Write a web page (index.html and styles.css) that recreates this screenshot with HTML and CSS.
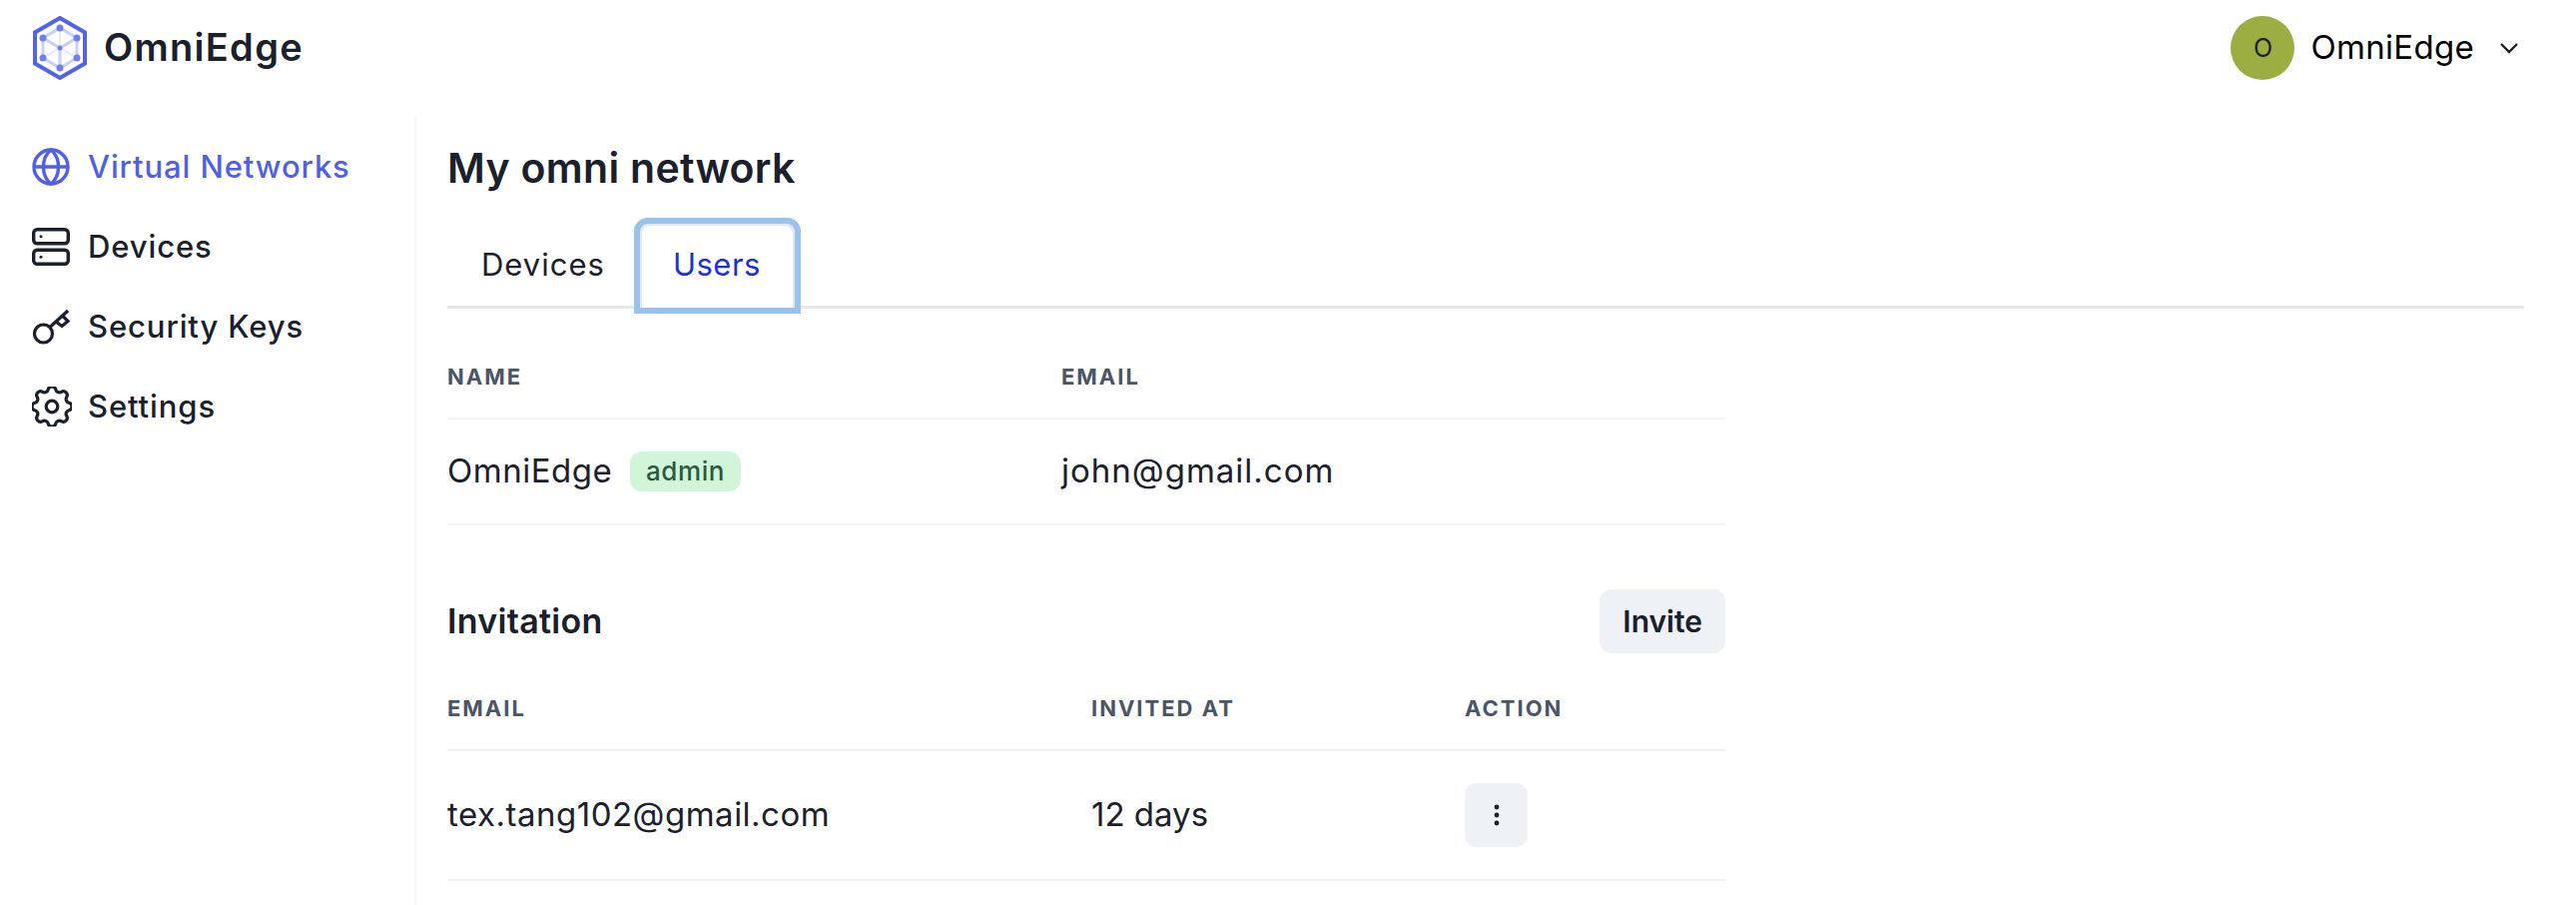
FILE: index.html
```html
<!DOCTYPE html>
<html>
<head>
    <meta charset="UTF-8">
    <title>OmniEdge</title>
    <meta name="viewport" content="width=device-width, initial-scale=1.0">
    <link rel="stylesheet" href="styles.css">
</head>
<body>
    <header class="topbar">
        <div class="brand">
            <svg class="brand-logo" viewBox="0 0 56 64" width="56" height="64">
                <g fill="none" stroke="#c7cffa" stroke-width="3">
                    <path d="M28 12 L45 22 V42 L28 52 L11 42 V22 Z"/>
                    <path d="M11 22 L28 32 L45 22 M28 32 V52"/>
                </g>
                <g fill="none" stroke="#e6e9fd" stroke-width="2">
                    <path d="M28 12 V32 M11 42 L28 32 L45 42"/>
                </g>
                <path d="M28 2 L53 16.5 V47.5 L28 62 L3 47.5 V16.5 Z" fill="none" stroke="#4f63eb" stroke-width="4"/>
                <g fill="#6f80ee">
                    <circle cx="28" cy="12" r="3.5"/>
                    <circle cx="45" cy="22" r="3.5"/>
                    <circle cx="45" cy="42" r="3.5"/>
                    <circle cx="28" cy="52" r="3.5"/>
                    <circle cx="11" cy="42" r="3.5"/>
                    <circle cx="11" cy="22" r="3.5"/>
                    <circle cx="28" cy="32" r="2.5"/>
                </g>
            </svg>
            <span class="brand-name">OmniEdge</span>
        </div>
        <div class="account">
            <span class="avatar">O</span>
            <span class="account-name">OmniEdge</span>
            <svg class="chevron" viewBox="0 0 20 12" width="20" height="12"><path d="M2 2 L10 10 L18 2" fill="none" stroke="#1a202c" stroke-width="2.4"/></svg>
        </div>
    </header>

    <div class="layout">
        <nav class="sidebar">
            <a class="nav-item active">
                <svg viewBox="0 0 38 38" width="38" height="38" fill="none" stroke="currentColor" stroke-width="3.4">
                    <circle cx="19" cy="19" r="17"/>
                    <path d="M2 19 H36"/>
                    <path d="M19 2 C9 10 9 28 19 36 C29 28 29 10 19 2 Z"/>
                </svg>
                <span class="nav-label">Virtual Networks</span>
            </a>
            <a class="nav-item">
                <svg viewBox="0 0 38 38" width="38" height="38" fill="none" stroke="currentColor" stroke-width="3.4">
                    <rect x="1.7" y="1.7" width="34.6" height="14" rx="3.5"/>
                    <rect x="1.7" y="22.3" width="34.6" height="14" rx="3.5"/>
                    <circle cx="9" cy="8.7" r="1.5" fill="currentColor" stroke="none"/>
                    <circle cx="9" cy="29.3" r="1.5" fill="currentColor" stroke="none"/>
                </svg>
                <span class="nav-label">Devices</span>
            </a>
            <a class="nav-item">
                <svg viewBox="0 0 38 38" width="38" height="38" fill="none" stroke="currentColor" stroke-width="3.2">
                    <circle cx="11.5" cy="26" r="9"/>
                    <path d="M18 19.5 L36 3"/>
                    <path d="M24 14 L30 18.5 L36 13.5 L30.5 8"/>
                </svg>
                <span class="nav-label">Security Keys</span>
            </a>
            <a class="nav-item">
                <svg class="nav-icon-wide" viewBox="3 3 18 18" width="40" height="40" fill="none" stroke="currentColor" stroke-width="1.45" stroke-linejoin="round">
                    <path d="M10.325 4.317c.426-1.756 2.924-1.756 3.35 0a1.724 1.724 0 002.573 1.066c1.543-.94 3.31.826 2.37 2.37a1.724 1.724 0 001.065 2.572c1.756.426 1.756 2.924 0 3.35a1.724 1.724 0 00-1.066 2.573c.94 1.543-.826 3.31-2.37 2.37a1.724 1.724 0 00-2.572 1.065c-.426 1.756-2.924 1.756-3.35 0a1.724 1.724 0 00-2.573-1.066c-1.543.94-3.31-.826-2.37-2.37a1.724 1.724 0 00-1.065-2.572c-1.756-.426-1.756-2.924 0-3.35a1.724 1.724 0 001.066-2.573c-.94-1.543.826-3.31 2.37-2.37.996.608 2.296.07 2.572-1.065z"/>
                    <circle cx="12" cy="12" r="2.6"/>
                </svg>
                <span class="nav-label">Settings</span>
            </a>
        </nav>

        <main class="content">
            <h1 class="page-title">My omni network</h1>
            <div class="tabs">
                <button class="tab">Devices</button>
                <button class="tab tab-selected">Users</button>
            </div>

            <div class="panel">
                <table class="list users-list">
                    <thead>
                        <tr><th class="col-name">Name</th><th>Email</th></tr>
                    </thead>
                    <tbody>
                        <tr>
                            <td>OmniEdge <span class="badge">admin</span></td>
                            <td class="cell-mail">john@gmail.com</td>
                        </tr>
                    </tbody>
                </table>

                <div class="section-head">
                    <h2 class="section-title">Invitation</h2>
                    <button class="btn">Invite</button>
                </div>

                <table class="list invites-list">
                    <thead>
                        <tr><th class="col-email">Email</th><th class="col-date">Invited at</th><th>Action</th></tr>
                    </thead>
                    <tbody>
                        <tr>
                            <td>tex.tang102@gmail.com</td>
                            <td class="cell-date">12 days</td>
                            <td class="cell-action">
                                <button class="btn btn-icon">
                                    <svg viewBox="0 0 6 22" width="6" height="22"><circle cx="3" cy="3" r="2.4" fill="#1a202c"/><circle cx="3" cy="11" r="2.4" fill="#1a202c"/><circle cx="3" cy="19" r="2.4" fill="#1a202c"/></svg>
                                </button>
                            </td>
                        </tr>
                    </tbody>
                </table>
            </div>
        </main>
    </div>
</body>
</html>
```

FILE: styles.css
```css
* {
    box-sizing: border-box;
}
html, body {
    height: 100%;
}
body {
    margin: 0;
    background-color: #fff;
    color: #1a202c;
    font-family: Inter, "Open Sans", sans-serif;
    font-size: 30px;
    overflow: hidden;
}
.topbar {
    display: flex;
    justify-content: space-between;
    align-items: center;
    height: 115px;
    padding: 0 57px 20px 32px;
}
.brand {
    display: flex;
    align-items: center;
    gap: 16px;
}
.brand-name {
    font-size: 38px;
    font-weight: 600;
    letter-spacing: 1.3px;
    margin-top: -2px;
}
.account {
    display: flex;
    align-items: center;
}
.avatar {
    display: flex;
    justify-content: center;
    align-items: center;
    width: 64px;
    height: 64px;
    border-radius: 50%;
    background-color: #9cae41;
    font-size: 25px;
    margin-right: 16px;
}
.account-name {
    color: #000;
    font-size: 33px;
    letter-spacing: 0.3px;
    margin-right: 25px;
    margin-top: -2px;
}
.layout {
    display: flex;
    height: 791px;
}
/* Sidebar */
.sidebar {
    width: 417px;
    padding: 12px 0 0 32px;
    border-right: 2px solid #f7f7f8;
}
.nav-item {
    display: flex;
    align-items: center;
    gap: 18px;
    height: 80px;
    font-size: 31px;
    font-weight: 500;
    letter-spacing: 0.9px;
}
.nav-item svg {
    flex: none;
}
.nav-label {
    margin-top: -2px;
}
.nav-icon-wide {
    margin-right: -2px;
}
.nav-item.active {
    color: #4f5fe8;
}
/* Main */
.content {
    flex: 1;
    padding: 28px 52px 0 31px;
}
.page-title {
    margin: 0;
    font-size: 41px;
    font-weight: 600;
    line-height: 50px;
    letter-spacing: 0.3px;
}
.tabs {
    display: flex;
    align-items: flex-start;
    margin-top: 25px;
    height: 91px;
    border-bottom: 3px solid #e2e8f0;
}
.tab {
    height: 96px;
    padding: 0 29px 4px 34px;
    background: none;
    border: none;
    border-radius: 14px 14px 0 0;
    font-family: inherit;
    font-size: 31px;
    letter-spacing: 1px;
    color: #1a202c;
}
.tab-selected {
    padding: 0 40px 4px 39px;
    background-color: #fff;
    color: #1a30e0;
    letter-spacing: 0.5px;
    box-shadow: inset 0 0 0 6px #9bc2ea, inset 2px 2px 0 6px #e2e8f0, inset -2px 2px 0 6px #e2e8f0;
}
.panel {
    width: 1280px;
}
.list {
    width: 100%;
    border-collapse: collapse;
}
.list th {
    height: 110px;
    padding: 26px 0 0;
    text-align: left;
    font-size: 22px;
    font-weight: 700;
    letter-spacing: 2px;
    text-transform: uppercase;
    color: #4a5568;
    border-bottom: 2px solid #edf2f7;
}
.list td {
    padding: 0 0 2px;
    height: 106px;
    font-size: 33px;
    letter-spacing: 0.5px;
    border-bottom: 2px solid #edf2f7;
}
.list td.cell-mail {
    letter-spacing: 1px;
}
.list td.cell-date {
    letter-spacing: 0;
}
.list td.cell-action {
    padding: 0;
}
.col-name {
    width: 615px;
}
.col-email {
    width: 645px;
}
.col-date {
    width: 374px;
}
.badge {
    display: inline-block;
    margin-left: 8px;
    padding: 0 16px;
    height: 40px;
    line-height: 40px;
    border-radius: 12px;
    background-color: #d1f5d8;
    color: #2a5a3f;
    font-size: 26px;
    font-weight: 500;
    letter-spacing: 0.6px;
    vertical-align: 2px;
}
.section-head {
    display: flex;
    justify-content: space-between;
    align-items: center;
    margin-top: 64px;
}
.section-title {
    margin: 0;
    font-size: 34px;
    font-weight: 600;
    letter-spacing: 0.3px;
    margin-top: -2px;
}
.btn {
    height: 64px;
    padding: 0 23px;
    border: none;
    border-radius: 12px;
    background-color: #eef1f6;
    color: #1a202c;
    font-family: inherit;
    font-size: 30px;
    font-weight: 600;
}
.btn-icon {
    display: flex;
    justify-content: center;
    align-items: center;
    width: 63px;
    padding: 0;
}
.invites-list th {
    height: 97px;
    padding-top: 13px;
}
.invites-list td {
    height: 130px;
}
```
